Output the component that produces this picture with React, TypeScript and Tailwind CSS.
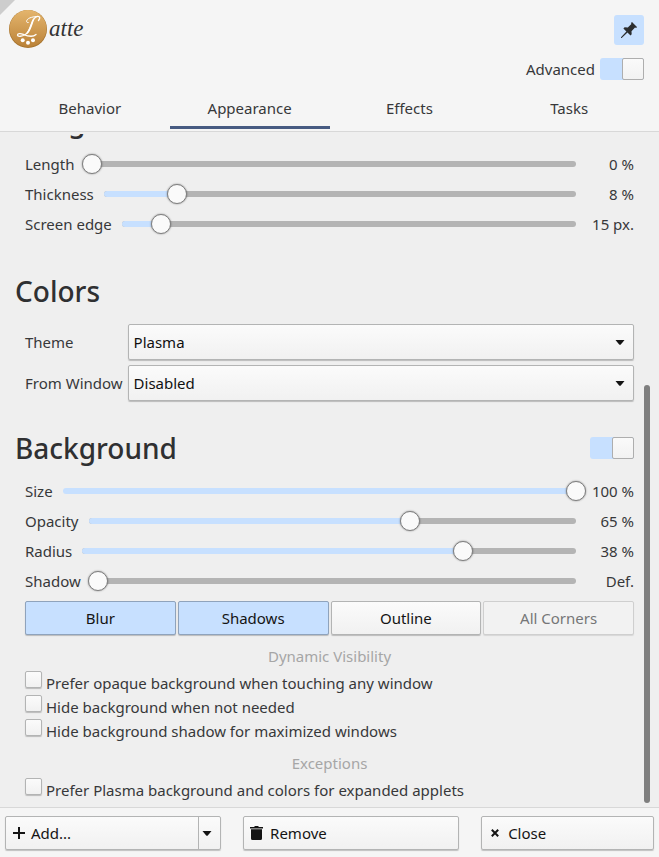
import { useState } from 'react';

const raised =
  'rounded-[2px] border border-[#b3b4b4] bg-linear-to-b from-[#fbfbfb] to-[#f1f1f1] shadow-[0_1px_1px_rgba(0,0,0,0.22)]';

function Toggle({ id, label }: { id: string; label?: string }) {
  const [on, setOn] = useState(true);
  return (
    <input
      id={id}
      type="checkbox"
      role="switch"
      aria-label={label}
      checked={on}
      onChange={() => setOn(!on)}
      className="flex h-[22px] w-[44px] shrink-0 appearance-none rounded-[3px] bg-[#d5d5d5] before:block before:size-[22px] before:rounded-[2px] before:border before:border-[#aeaeae] before:bg-linear-to-b before:from-[#fafafa] before:to-[#f2f2f2] checked:justify-end checked:bg-[#c7e0ff]"
    />
  );
}

function SliderRow({ label, text, initial }: { label: string; text: string; initial: number }) {
  const [value, setValue] = useState(initial);
  const id = 'slider-' + label.toLowerCase().replace(' ', '-');
  return (
    <div className="flex h-[30px] items-center pl-[10px]">
      <label htmlFor={id} className="shrink-0 pr-[10px]">
        {label}
      </label>
      <div className="grid min-w-0 flex-1 items-center">
        <div className="col-start-1 row-start-1 h-[6px] overflow-hidden rounded-full bg-[#b4b4b4]">
          <div
            className="h-full bg-[#c7e0ff]"
            style={{ width: value === 0 ? 0 : `calc(7px + (100% - 7px) * ${value / 1000})` }}
          />
        </div>
        <input
          id={id}
          type="range"
          min={0}
          max={1000}
          value={value}
          onChange={(e) => setValue(Number(e.target.value))}
          className="col-start-1 row-start-1 -mr-[10px] -ml-[3px] h-[20px] appearance-none bg-transparent [&::-webkit-slider-thumb]:size-[20px] [&::-webkit-slider-thumb]:appearance-none [&::-webkit-slider-thumb]:rounded-full [&::-webkit-slider-thumb]:border [&::-webkit-slider-thumb]:border-[#7f7f7f] [&::-webkit-slider-thumb]:bg-[#fafafa] [&::-webkit-slider-thumb]:shadow-[0_0_2px_rgba(0,0,0,0.45)]"
        />
      </div>
      <output htmlFor={id} className="w-[58px] shrink-0 text-right">
        {text}
      </output>
    </div>
  );
}

function Arrow() {
  return (
    <svg viewBox="0 0 10 5" className="h-[5px] w-[10px]" aria-hidden="true">
      <path d="M0.5 0h9L5.8 4.4q-.8.8-1.6 0z" fill="#141414" />
    </svg>
  );
}

function Dropdown({ id, options }: { id: string; options: string[] }) {
  return (
    <div className="relative">
      <select id={id} className={`${raised} h-[36px] w-full appearance-none px-[5px] text-[#101010]`}>
        {options.map((o) => (
          <option key={o}>{o}</option>
        ))}
      </select>
      <span className="pointer-events-none absolute inset-y-0 right-[9px] flex items-center">
        <Arrow />
      </span>
    </div>
  );
}

function Check({ label }: { label: string }) {
  return (
    <label className="flex h-[24px] gap-[4px] pl-[10px]">
      <input type="checkbox" className={`${raised} size-[17px] shrink-0 appearance-none checked:bg-[#c7e0ff]`} />
      <span className="leading-[24px]">{label}</span>
    </label>
  );
}

function Logo() {
  return (
    <div className="flex h-[38px] items-center gap-[2px] pl-[9px]">
      <svg viewBox="0 0 38 38" className="size-[38px]" aria-hidden="true">
        <defs>
          <linearGradient id="coffee" x1="0" y1="0" x2="0" y2="1">
            <stop offset="0" stopColor="#e4b56d" />
            <stop offset="1" stopColor="#bb8238" />
          </linearGradient>
        </defs>
        <circle cx="19" cy="19" r="19" fill="#a8752f" />
        <circle cx="19" cy="18.5" r="18.5" fill="url(#coffee)" />
        <g fill="none" stroke="#fff" strokeLinecap="round">
          <path d="M29.5 10.5C31.5 8 31 6.2 28.5 6.4 25 6.8 23.3 11 22 15c-1.400 4.300-2.800 8-6 9.800-2.800 1.600-7.300 2.200-7.500.3-.2-1.600 2.800-2 5.800-.8 3.700 1.600 9 3.500 12.700.2" strokeWidth="1.300" />
          <path d="M24.500 9.500C22.800 13 21.800 19 18.500 22.800" strokeWidth="1.600" />
          <path d="M27.500 6.600C22.500 6.700 17.800 8.500 17.600 11.300c0 1 .7 1.500 1.600 1.300" strokeWidth="1" />
        </g>
        <circle cx="13.7" cy="30.3" r="2" fill="#fff" />
        <circle cx="19" cy="32.8" r="2" fill="#fff" />
        <circle cx="24" cy="30.3" r="2" fill="#fff" />
      </svg>
      <span className="font-['Liberation_Serif',serif] text-[23px] leading-[38px] text-[#333] italic">atte</span>
    </div>
  );
}

const tabs = ['Behavior', 'Appearance', 'Effects', 'Tasks'];
const heading = 'text-[28px] leading-[40px] font-medium text-[#2f3032]';
const footerButton = `${raised} flex h-[34px] items-center text-[#141414]`;

export default function App() {
  const [tab, setTab] = useState('Appearance');
  const [modes, setModes] = useState(['Blur', 'Shadows']);
  const flip = (m: string) => setModes(modes.includes(m) ? modes.filter((x) => x !== m) : [...modes, m]);

  return (
    <div className="flex h-screen flex-col bg-[#f5f5f5] font-['Noto_Sans',sans-serif] text-[15px] leading-[20px] text-[#37383a]">
      <header className="relative border-b border-[#d8d8d8] pb-[2px]">
        <svg viewBox="0 0 15 15" className="absolute top-0 left-0 size-[15px]" aria-hidden="true">
          <path d="M0 0h15L0 15z" fill="#cdcdcd" />
        </svg>
        <div className="flex justify-between pt-[10px] pr-[15px]">
          <Logo />
          <div className="flex flex-col items-end gap-[13px] pt-[5px]">
            <button
              type="button"
              aria-label="Keep open"
              className="flex size-[30px] items-center justify-center rounded-[3px] bg-[#c7e0ff]"
            >
              <svg viewBox="0 0 16 16" className="size-[16px]" aria-hidden="true">
                <path
                  d="M11 0 16 5l-.8.9-1.200-.3-3.500 3.600.2 3.100-1.200 1.200-3-3L.7 16H0v-.7l5.400-5.800-3-3 1.200-1.200 3.200.2L10.400 2 10 .9z"
                  fill="#2b2d2f"
                />
              </svg>
            </button>
            <div className="flex h-[22px] items-center gap-[5px]">
              <label htmlFor="advanced">Advanced</label>
              <Toggle id="advanced" />
            </div>
          </div>
        </div>
        <nav role="tablist" className="mt-[8px] grid grid-cols-4 px-[10px]">
          {tabs.map((t) => (
            <button
              key={t}
              type="button"
              role="tab"
              aria-selected={t === tab}
              onClick={() => setTab(t)}
              className={`h-[41px] border-b-3 pt-[2px] ${t === tab ? 'border-[#475b82]' : 'border-transparent'}`}
            >
              {t}
            </button>
          ))}
        </nav>
      </header>

      <main className="flex min-h-0 flex-1 bg-[#efefef] pt-[2px] pr-[9px] pb-[4px] pl-[15px]">
        <div className="flex min-w-0 flex-1 flex-col justify-end overflow-hidden pr-[10px] pb-[1px]">
          <section className="shrink-0">
            <h2 className={`${heading} mb-[8px]`}>Margins</h2>
            <SliderRow label="Length" text="0 %" initial={0} />
            <SliderRow label="Thickness" text="8 %" initial={142} />
            <SliderRow label="Screen edge" text="15 px." initial={72} />
          </section>

          <section className="mt-[32px] shrink-0">
            <h2 className={heading}>Colors</h2>
            <div className="mt-[13px] grid grid-cols-[auto_1fr] items-center gap-x-[5px] gap-y-[5px] pl-[10px]">
              <label htmlFor="theme">Theme</label>
              <Dropdown id="theme" options={['Plasma', 'Reverse', 'Smart']} />
              <label htmlFor="from-window">From Window</label>
              <Dropdown id="from-window" options={['Disabled', 'Current Active Window', 'Any Touching Window']} />
            </div>
          </section>

          <section className="mt-[27px] shrink-0">
            <div className="flex items-center justify-between">
              <h2 className={heading}>Background</h2>
              <Toggle id="background" label="Background" />
            </div>
            <div className="mt-[8px]">
              <SliderRow label="Size" text="100 %" initial={1000} />
              <SliderRow label="Opacity" text="65 %" initial={654} />
              <SliderRow label="Radius" text="38 %" initial={767} />
              <SliderRow label="Shadow" text="Def." initial={0} />
            </div>
            <div className="mt-[5px] grid grid-cols-4 gap-[2px] pl-[10px]">
              {['Blur', 'Shadows', 'Outline'].map((m) => (
                <button
                  key={m}
                  type="button"
                  aria-pressed={modes.includes(m)}
                  onClick={() => flip(m)}
                  className={`h-[34px] rounded-[2px] border text-[#141414] shadow-[0_1px_1px_rgba(0,0,0,0.22)] ${
                    modes.includes(m)
                      ? 'border-[#8fa3bc] bg-[#c7e0ff]'
                      : 'border-[#b3b4b4] bg-linear-to-b from-[#fbfbfb] to-[#f1f1f1]'
                  }`}
                >
                  {m}
                </button>
              ))}
              <button
                type="button"
                disabled
                className="h-[34px] rounded-[2px] border border-[#cfcfcf] bg-[#f2f2f2] text-[#757677] shadow-[0_1px_1px_rgba(0,0,0,0.1)]"
              >
                All Corners
              </button>
            </div>
            <h3 className="mt-[9px] pl-[10px] text-center leading-[24px] text-[#a6a6a6]">Dynamic Visibility</h3>
            <div className="mt-[3px]">
              <Check label="Prefer opaque background when touching any window" />
              <Check label="Hide background when not needed" />
              <Check label="Hide background shadow for maximized windows" />
            </div>
            <h3 className="mt-[8px] pl-[10px] text-center leading-[24px] text-[#a6a6a6]">Exceptions</h3>
            <div className="mt-[3px]">
              <Check label="Prefer Plasma background and colors for expanded applets" />
            </div>
          </section>
        </div>
        <div className="flex w-[6px] flex-col justify-end">
          <div className="h-[62.5%] rounded-full bg-[#7f7f7f]" />
        </div>
      </main>

      <footer className="grid grid-cols-[5fr_5fr_4fr] gap-[22px] border-t border-[#d8d8d8] px-[5px] pt-[8px] pb-[7px]">
        <div className={`${raised} flex h-[34px] text-[#141414]`}>
          <button type="button" className="flex flex-1 items-center gap-[6px] pl-[7px]">
            <svg viewBox="0 0 12 12" className="size-[12px]" aria-hidden="true">
              <path d="M6 0v12M0 6h12" stroke="#141414" strokeWidth="2" />
            </svg>
            Add...
          </button>
          <button
            type="button"
            aria-label="More"
            className="flex w-[22px] items-center justify-center border-l border-[#b3b4b4] pr-[6px]"
          >
            <Arrow />
          </button>
        </div>
        <button type="button" className={`${footerButton} gap-[7px] pl-[6px]`}>
          <svg viewBox="0 0 13 14" className="h-[14px] w-[13px]" aria-hidden="true">
            <path d="M0 1h4l1-1h3l1 1h4v1.600H0zM1 3.200h11v9.300q0 1.500-1.500 1.500h-8Q1 14 1 12.500z" fill="#141414" />
          </svg>
          Remove
        </button>
        <button type="button" className={`${footerButton} gap-[9px] pl-[9px]`}>
          <svg viewBox="0 0 8 8" className="size-[8px]" aria-hidden="true">
            <path d="M.8.8l6.400 6.400M7.200.8.8 7.200" stroke="#141414" strokeWidth="2" />
          </svg>
          Close
        </button>
      </footer>
    </div>
  );
}
